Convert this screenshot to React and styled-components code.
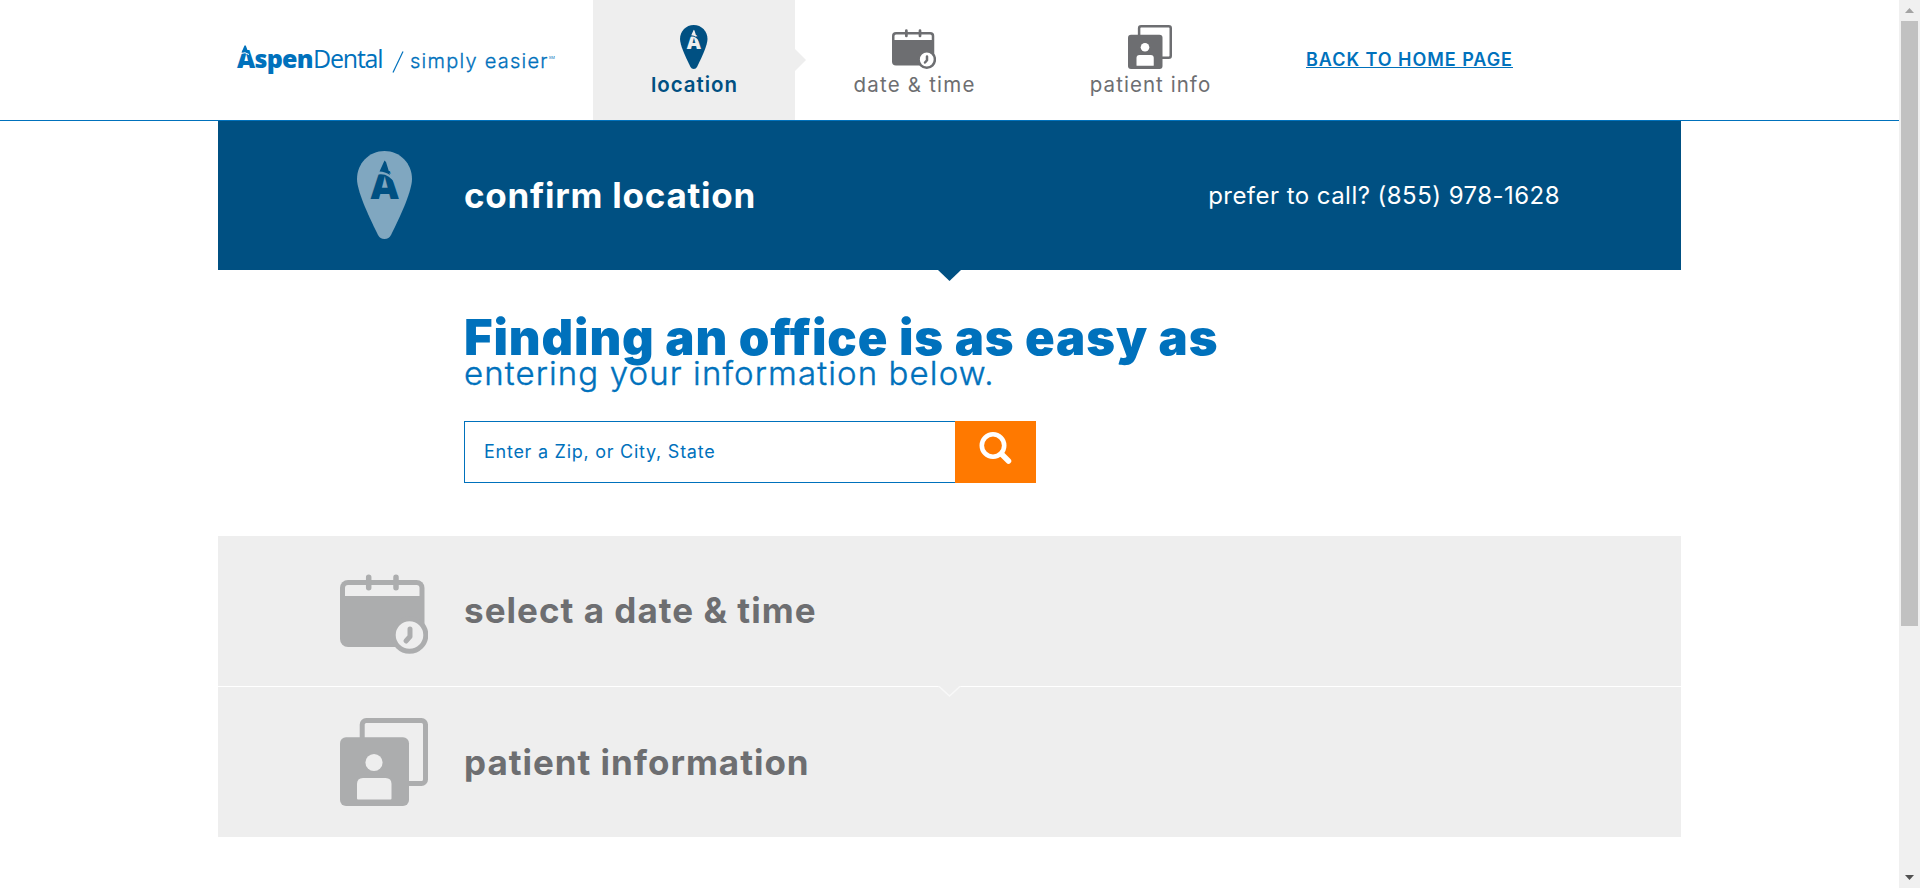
import React from "react";
import styled, { createGlobalStyle } from "styled-components";

const navy = "#005082";
const blue = "#0071bc";
const gray = "#6d6e71";
const pale = "#eeeeee";

const GlobalStyle = createGlobalStyle`
  * { box-sizing: border-box; }
  html, body { margin: 0; height: 888px; overflow: hidden; background: #fff; }
  body { font-family: Inter, "Liberation Sans", sans-serif; }
  svg { display: block; flex: none; }
`;

const Viewport = styled.div`
  display: flex;
  width: 1920px;
  height: 888px;
`;

const Page = styled.div`
  flex: 1;
`;

const Header = styled.header`
  display: flex;
  height: 121px;
  border-bottom: 1px solid ${blue};
`;

const Logo = styled.div`
  display: flex;
  align-items: flex-start;
  width: 593px;
  padding: 38px 0 0 237px;
  color: ${blue};
  white-space: nowrap;
`;

const Brand = styled.span`
  position: relative;
  width: 76px;
  font: 800 25px/40px "Open Sans", sans-serif;
  letter-spacing: -0.7px;
`;

const BrandPeak = styled.svg`
  position: absolute;
  left: 4px;
  top: 7px;
`;

const BrandLight = styled.span`
  width: 79px;
  font: 400 25px/40px "Open Sans", sans-serif;
  letter-spacing: -1.2px;
`;

const Slash = styled.svg`
  margin-top: 13px;
`;

const Tagline = styled.span`
  margin-left: 6px;
  font-size: 20px;
  font-weight: 300;
  line-height: 46px;
  letter-spacing: 1.25px;
  -webkit-text-stroke: 0.3px ${blue};
`;

const ServiceMark = styled.span`
  font-size: 4px;
  line-height: 39px;
  letter-spacing: 0;
`;

const Step = styled.div`
  position: relative;
  display: flex;
  flex-direction: column;
  align-items: center;
  gap: 4px;
  width: ${(p) => p.$width}px;
  padding-top: 25px;
  background: ${(p) => (p.$active ? pale : "transparent")};
  color: ${(p) => (p.$active ? navy : gray)};
`;

const StepLabel = styled.span`
  font-size: 20.5px;
  line-height: 24px;
  font-weight: ${(p) => (p.$active ? 600 : 400)};
  letter-spacing: ${(p) => p.$spacing}px;
  margin-right: -${(p) => p.$spacing}px;
`;

const StepArrow = styled.svg`
  position: absolute;
  left: 100%;
  top: 49px;
`;

const HomeLink = styled.a`
  margin: 48px 0 0 39px;
  height: 20px;
  border-bottom: 1px solid ${blue};
  color: ${blue};
  font-size: 18px;
  font-weight: 600;
  line-height: 23px;
  letter-spacing: 0.96px;
  white-space: nowrap;
`;

const Content = styled.main`
  width: 1463px;
  margin: 0 auto;
`;

const Section = styled.section`
  position: relative;
  display: flex;
  align-items: center;
  height: ${(p) => p.$height}px;
  padding-right: 121px;
  background: ${(p) => (p.$active ? navy : pale)};
  color: ${(p) => (p.$active ? "#fff" : gray)};
  & + & { border-top: 1px solid #fff; }
`;

const SectionIcon = styled.div`
  display: flex;
  justify-content: center;
  width: 246px;
  padding-left: ${(p) => p.$indent}px;
  padding-bottom: ${(p) => p.$lift || 0}px;
`;

const SectionTitle = styled.h2`
  flex: 1;
  margin: 0;
  padding-bottom: ${(p) => p.$lift || 0}px;
  font-size: 35px;
  font-weight: 700;
  line-height: 42px;
  letter-spacing: ${(p) => p.$spacing}px;
`;

const Phone = styled.span`
  padding-top: 1px;
  font-size: 24px;
  line-height: 30px;
  letter-spacing: 0.46px;
`;

const Notch = styled.svg`
  position: absolute;
  z-index: 1;
  left: 720px;
  top: ${(p) => p.$top}px;
`;

const Finder = styled.section`
  height: 266px;
  padding: 38px 0 0 246px;
  color: ${blue};
`;

const Headline = styled.h1`
  margin: 0;
  padding-top: 12px;
  font-size: 49px;
  font-weight: 900;
  line-height: 36px;
  letter-spacing: 0.87px;
`;

const Subline = styled.p`
  margin: 0;
  font-size: 33px;
  font-weight: 300;
  line-height: 35px;
  letter-spacing: 1.11px;
  -webkit-text-stroke: 0.4px ${blue};
`;

const SearchBar = styled.form`
  display: flex;
  width: 572px;
  height: 62px;
  margin-top: 30px;
`;

const SearchInput = styled.input`
  flex: 1;
  border: 1px solid ${blue};
  border-right: 0;
  border-radius: 0;
  padding: 0 19px 2px;
  outline: 0;
  font: 400 18px Inter, sans-serif;
  letter-spacing: 0.74px;
  &::placeholder { color: ${blue}; opacity: 1; }
`;

const SearchButton = styled.button`
  display: flex;
  justify-content: center;
  width: 81px;
  padding: 11px 0 0;
  border: 0;
  background: #ff7900;
`;

const ScrollTrack = styled.div`
  display: flex;
  flex-direction: column;
  align-items: center;
  width: 21px;
  background: #f0f0f0;
`;

const ScrollButton = styled.div`
  display: flex;
  align-items: center;
  justify-content: center;
  height: 21px;
`;

const ScrollThumb = styled.div`
  width: 17px;
  height: 605px;
  margin-bottom: auto;
  background: #c1c1c1;
`;

function PinIcon({ width, height, color, mark }) {
  return (
    <svg width={width} height={height} viewBox="0 0 55 88">
      <path
        fill={color}
        d="M27.500 0C12 0 0 12.500 0 28C0 39 10 62 21 84Q23 88 27.500 88Q32 88 34 84C45 62 55 39 55 28C55 12.500 43 0 27.500 0Z"
      />
      <text
        x="27.600"
        y="48"
        textAnchor="middle"
        fontFamily="Open Sans"
        fontWeight="800"
        fontSize="39"
        fill={mark}
      >
        A
      </text>
      <path d="M18 22.500Q31 18 40 32" fill="none" stroke={color} strokeWidth="3.500" />
      <path d="M27.500 9.500L22.500 20.500Q28 20.500 33 24L29 11Z" fill={mark} />
    </svg>
  );
}

function CalendarIcon({ size, color, hole }) {
  return (
    <svg width={size} height={size} viewBox="0 0 88 88">
      <rect x="0" y="14" width="84.500" height="67" rx="8" fill={color} />
      <path d="M5 30V22Q5 19 8 19H76.500Q79.500 19 79.500 22V30Z" fill={hole} />
      <path d="M28.700 11.300V21.800M56 11.300V21.800" stroke={color} strokeWidth="5.500" strokeLinecap="round" />
      <circle cx="69.500" cy="69" r="16.300" fill={hole} stroke={color} strokeWidth="5" />
      <path
        d="M70 63V70.500L66 75"
        fill="none"
        stroke={color}
        strokeWidth="5"
        strokeLinecap="round"
        strokeLinejoin="round"
      />
    </svg>
  );
}

function PatientIcon({ size, color, hole }) {
  return (
    <svg width={size} height={size} viewBox="0 0 88 88">
      <rect x="22.200" y="2.500" width="63.300" height="63" rx="4" fill="none" stroke={color} strokeWidth="5" />
      <rect x="0" y="19.300" width="69" height="68.700" rx="6" fill={color} />
      <circle cx="34" cy="44.500" r="8.600" fill={hole} />
      <path d="M17 80.500V66Q17 60 23 60H45.500Q51.500 60 51.500 66V80.500Q51.500 81.500 50.500 81.500H18Q17 81.500 17 80.500Z" fill={hole} />
    </svg>
  );
}

export default function App() {
  return (
    <Viewport>
      <GlobalStyle />
      <Page>
        <Header>
          <Logo>
            <Brand>
              Aspen
              <BrandPeak width="8" height="10" viewBox="0 0 8 10">
                <path d="M0 8.500Q4 6.500 8 9.500" fill="none" stroke="#fff" strokeWidth="1" />
                <path d="M3.500 0.500L0.500 7.500Q4 6 7.500 8L4.800 0.500Z" fill={blue} />
              </BrandPeak>
            </Brand>
            <BrandLight>Dental</BrandLight>
            <Slash width="12" height="22" viewBox="0 0 12 22">
              <path d="M11 0.500L1 21.500" stroke={blue} strokeWidth="1.200" />
            </Slash>
            <Tagline>simply easier</Tagline>
            <ServiceMark>SM</ServiceMark>
          </Logo>
          <Step $active $width={202}>
            <PinIcon width={27.5} height={44} color={navy} mark={pale} />
            <StepLabel $active $spacing={0.95}>location</StepLabel>
            <StepArrow width="11" height="22" viewBox="0 0 11 22">
              <path d="M0 0L11 11L0 22Z" fill={pale} />
            </StepArrow>
          </Step>
          <Step $width={238}>
            <CalendarIcon size={44} color={gray} hole="#fff" />
            <StepLabel $spacing={1.2}>date &amp; time</StepLabel>
          </Step>
          <Step $width={234}>
            <PatientIcon size={44} color={gray} hole="#fff" />
            <StepLabel $spacing={1.05}>patient info</StepLabel>
          </Step>
          <HomeLink>BACK TO HOME PAGE</HomeLink>
        </Header>

        <Content>
          <Section $active $height={149}>
            <SectionIcon $indent={87} $lift={1}>
              <PinIcon width={55} height={88} color="#80a7c0" mark={navy} />
            </SectionIcon>
            <SectionTitle $spacing={0.75} $lift={2}>confirm location</SectionTitle>
            <Phone>prefer to call? (855) 978-1628</Phone>
            <Notch $top={149} width="23" height="11" viewBox="0 0 23 11">
              <path d="M0 0H23L11.500 11Z" fill={navy} />
            </Notch>
          </Section>

          <Finder>
            <Headline>Finding an office is as easy as</Headline>
            <Subline>entering your information below.</Subline>
            <SearchBar>
              <SearchInput placeholder="Enter a Zip, or City, State" />
              <SearchButton type="button" aria-label="Search">
                <svg width="33" height="32" viewBox="0 0 33 32">
                  <circle cx="14" cy="13.500" r="11.200" fill="none" stroke="#fff" strokeWidth="4.600" />
                  <path d="M22.500 22L29.500 29" stroke="#fff" strokeWidth="5.500" strokeLinecap="round" />
                </svg>
              </SearchButton>
            </SearchBar>
          </Finder>

          <Section $height={150}>
            <SectionIcon $indent={85} $lift={2}>
              <CalendarIcon size={88} color="#acadae" hole={pale} />
            </SectionIcon>
            <SectionTitle $spacing={1.03} $lift={2}>select a date &amp; time</SectionTitle>
            <Notch $top={150} width="23" height="11" viewBox="0 0 23 11">
              <path d="M1 0H22L11.500 10Z" fill={pale} />
              <path d="M0.500 0L11.500 10L22.500 0" fill="none" stroke="#f8f8f8" strokeWidth="1.500" />
            </Notch>
          </Section>
          <Section $height={151}>
            <SectionIcon $indent={85}>
              <PatientIcon size={88} color="#acadae" hole={pale} />
            </SectionIcon>
            <SectionTitle $spacing={0.98}>patient information</SectionTitle>
          </Section>
        </Content>
      </Page>

      <ScrollTrack>
        <ScrollButton>
          <svg width="9" height="5" viewBox="0 0 9 5">
            <path d="M0 5L4.500 0L9 5Z" fill="#a3a3a3" />
          </svg>
        </ScrollButton>
        <ScrollThumb />
        <ScrollButton>
          <svg width="9" height="5" viewBox="0 0 9 5">
            <path d="M0 0H9L4.500 5Z" fill="#505050" />
          </svg>
        </ScrollButton>
      </ScrollTrack>
    </Viewport>
  );
}
